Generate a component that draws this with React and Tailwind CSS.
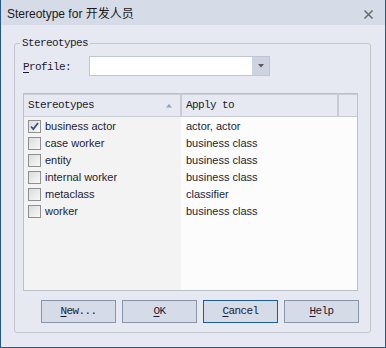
const mono = { fontFamily: '"Liberation Mono", "DejaVu Sans Mono", monospace' };

const rows = [
  { name: "business actor", apply: "actor, actor", checked: true },
  { name: "case worker", apply: "business class" },
  { name: "entity", apply: "business class" },
  { name: "internal worker", apply: "business class" },
  { name: "metaclass", apply: "classifier" },
  { name: "worker", apply: "business class" },
];

function Check({ checked }) {
  return (
    <span className="w-[13px] h-[13px] border border-[#8e8f8f] bg-gradient-to-br from-[#dcdcdc] to-[#f8f8f8] flex items-center justify-center shrink-0">
      {checked && (
        <svg width="9" height="9" viewBox="0 0 9 9">
          <path d="M1 4.5 L3.3 7 L8 1" fill="none" stroke="#3c4c84" strokeWidth="1.8" />
        </svg>
      )}
    </span>
  );
}

function Btn({ first, rest, focus }) {
  return (
    <button
      className={`w-[75px] h-[23px] bg-[#d6dbe8] border flex items-center justify-center text-[11px] tracking-[-0.6px] text-[#1a1a30] ${
        focus ? "border-[#1c5c9c]" : "border-[#8a94a8]"
      }`}
      style={mono}
    >
      <span className="underline underline-offset-2">{first}</span>
      {rest}
    </button>
  );
}

export default function App() {
  return (
    <div
      className="w-[386px] h-[348px] bg-[#e6e9f2] border-x border-b border-[#1c5c9c] flex flex-col"
      style={{ fontFamily: '"Liberation Sans", "Noto Sans CJK SC", sans-serif' }}
    >
      <div className="h-[25px] bg-[#d6dbe8] flex items-center justify-between pl-[6px] pr-[12px] pt-[3px] shrink-0">
        <span className="text-[12px] text-[#1a1a1a]">Stereotype for 开发人员</span>
        <svg width="9" height="9" viewBox="0 0 9 9">
          <path d="M0.5 0.5 L8.5 8.5 M8.5 0.5 L0.5 8.5" stroke="#6a6a6a" strokeWidth="1.5" />
        </svg>
      </div>

      <fieldset className="mt-[12px] ml-[13px] w-[357px] h-[296px] border border-[#c2c6ce] rounded-[3px] flex flex-col">
        <legend className="ml-[5px] px-[2px] text-[11px] leading-[12px] tracking-[-0.6px] text-[#1a1a30]" style={mono}>
          Stereotypes
        </legend>

        <div className="mt-[7px] ml-[8px] flex items-center h-[20px]">
          <span className="w-[66px] text-[11px] tracking-[-0.6px] text-[#1a1a30] pt-[2px]" style={mono}>
            <span className="underline underline-offset-2">P</span>rofile:
          </span>
          <div className="w-[181px] h-[20px] bg-white border border-[#c2c6ce] flex justify-end">
            <div className="w-[17px] h-full bg-[#cdd3e0] flex items-center justify-center">
              <svg width="6" height="4" viewBox="0 0 6 4">
                <path d="M0 0 H6 L3 3.5 Z" fill="#5a5a5a" />
              </svg>
            </div>
          </div>
        </div>

        <div className="mt-[17px] ml-[8px] w-[335px] h-[198px] border border-[#bcc0c8] flex flex-col">
          <div className="h-[23px] bg-[#e6e9f2] border-t border-b border-[#c8ccd4] flex shrink-0 text-[11px] tracking-[-0.6px] text-[#1a1a30]" style={mono}>
            <div className="w-[158px] border-r-2 border-[#c8ccd4] flex items-center justify-between pl-[4px] pr-[8px]">
              <span>Stereotypes</span>
              <svg width="6" height="4" viewBox="0 0 6 4">
                <path d="M0 3.5 H6 L3 0 Z" fill="#8aa2c4" />
              </svg>
            </div>
            <div className="w-[157px] border-r-2 border-[#c8ccd4] flex items-center pl-[4px]">Apply to</div>
            <div className="flex-1" />
          </div>
          <div className="flex-1 flex text-[11px] text-[#1c1c34]">
            <div className="w-[157px] bg-[#f3f3f3] pt-[1px]">
              {rows.map((r) => (
                <div key={r.name} className="h-[17px] flex items-center pl-[4px] gap-[4px]">
                  <Check checked={r.checked} />
                  <span>{r.name}</span>
                </div>
              ))}
            </div>
            <div className="flex-1 bg-[#fcfcfc] pt-[1px]">
              {rows.map((r) => (
                <div key={r.name} className="h-[17px] flex items-center pl-[5px]">
                  {r.apply}
                </div>
              ))}
            </div>
          </div>
        </div>

        <div className="mt-[9px] ml-[26px] flex gap-[6px]">
          <Btn first="N" rest="ew..." />
          <Btn first="O" rest="K" />
          <Btn first="C" rest="ancel" focus />
          <Btn first="H" rest="elp" />
        </div>
      </fieldset>
    </div>
  );
}
